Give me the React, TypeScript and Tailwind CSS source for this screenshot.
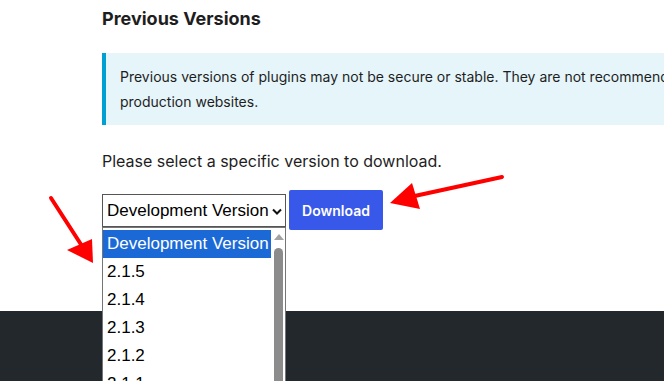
import React from "react";

const versions = ["2.1.5", "2.1.4", "2.1.3", "2.1.2", "2.1.1", "2.1.0"];

export default function App() {
  return (
    <div className="relative w-[664px] h-[381px] overflow-hidden bg-white" style={{ fontFamily: "Inter, 'Noto Sans', sans-serif" }}>
      <div className="flex flex-col pl-[102px] text-[#1e1e1e]">
        <h2 className="mt-[5px] text-[18px] leading-[28px] font-bold text-[#1e1e1e]">Previous Versions</h2>
        <div className="mt-[20px] w-[690px] border-l-4 border-[#00a0d2] bg-[#e5f5fa] pl-[14px] py-[11px] text-[14px] leading-[25px] text-[#1e1e1e]">
          Previous versions of plugins may not be secure or stable. They are not recommended for use on production websites.
        </div>
        <p className="mt-[22px] text-[16px] leading-[28px]">Please select a specific version to download.</p>
        <div className="mt-[15px] flex items-start gap-[3px]">
          <div className="mt-[4px] flex h-[33px] w-[184px] items-center justify-between border border-[#555] bg-white pl-[4px] pr-[3px] text-[17px] text-black" style={{ fontFamily: "'Liberation Sans', Arial, sans-serif" }}>
            <span>Development Version</span>
            <svg width="10" height="7" viewBox="0 0 10 7" className="mt-[2px]">
              <path d="M1 1.5 L5 5.5 L9 1.5" fill="none" stroke="#111" strokeWidth="2" />
            </svg>
          </div>
          <button className="h-[40px] w-[94px] rounded-[2px] bg-[#3858e9] text-[14px] font-semibold text-white">Download</button>
        </div>
      </div>
      <div className="absolute left-0 right-0 top-[311px] bottom-0 bg-[#23282d]" />
      <div className="absolute left-[102px] top-[227px] h-[170px] w-[184px] border border-[#767676] bg-white" style={{ fontFamily: "'Liberation Sans', Arial, sans-serif" }}>
        <div className="flex">
          <div className="flex w-[168px] flex-col pt-[2px]">
            <div className="h-[28px] bg-[#1b69d6] pl-[4px] text-[17px] leading-[28px] text-white whitespace-nowrap">Development Version</div>
            {versions.map((v) => (
              <div key={v} className="h-[28px] pl-[4px] text-[17px] leading-[28px] text-black">{v}</div>
            ))}
          </div>
          <div className="ml-[2px] flex w-[11px] flex-col items-center pt-[6px]">
            <svg width="10" height="6" viewBox="0 0 10 6">
              <path d="M0 6 L5 0 L10 6 Z" fill="#a3a3a3" />
            </svg>
            <div className="mt-[8px] h-[200px] w-[9px] rounded-t-full bg-[#8c8c8c]" />
          </div>
        </div>
      </div>
      <svg className="absolute inset-0" width="664" height="381" viewBox="0 0 664 381">
        <line x1="502" y1="177" x2="410" y2="197" stroke="#ff0000" strokeWidth="4" strokeLinecap="round" />
        <polygon points="390,203 412,183 420,209" fill="#ff0000" />
        <line x1="51" y1="198" x2="82" y2="246" stroke="#ff0000" strokeWidth="4" strokeLinecap="round" />
        <polygon points="93,263 67,250 92,239" fill="#ff0000" />
      </svg>
    </div>
  );
}
